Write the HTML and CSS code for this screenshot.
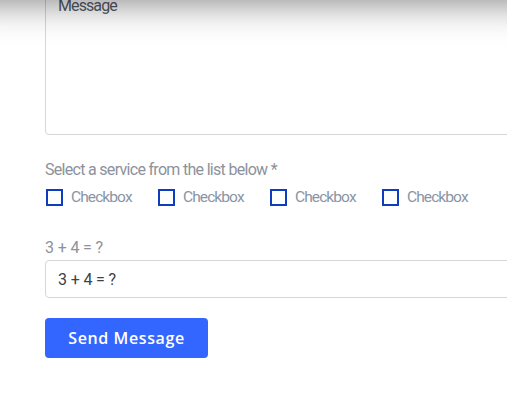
FILE: index.html
```html
<!DOCTYPE html>
<html>
<head>
<meta charset="utf-8">
<link rel="stylesheet" href="styles.css">
</head>
<body>
<div class="header-shadow"></div>
<form class="form">
  <div class="textarea">Message</div>
  <div class="field">
    <div class="label">Select a service from the list below *</div>
    <div class="checks">
      <label class="check"><span class="box"></span>Checkbox</label>
      <label class="check"><span class="box"></span>Checkbox</label>
      <label class="check"><span class="box"></span>Checkbox</label>
      <label class="check"><span class="box"></span>Checkbox</label>
    </div>
  </div>
  <div class="field captcha">
    <div class="label sum">3 + 4 = ?</div>
    <div class="input">3 + 4 = ?</div>
  </div>
  <button type="button" class="send">Send Message</button>
</form>
</body>
</html>
```
FILE: styles.css
```css
html, body {
  margin: 0;
  padding: 0;
  background: #fff;
  overflow: hidden;
}
body {
  font-family: Roboto, "Liberation Sans", sans-serif;
  width: 507px;
  height: 403px;
}
.header-shadow {
  position: fixed;
  top: -40px;
  left: -40px;
  right: -40px;
  height: 40px;
  background: #fff;
  box-shadow: 0 0 38px rgba(0, 0, 0, 0.55);
}
.form {
  padding-left: 45px;
  width: 520px;
  display: flex;
  flex-direction: column;
  align-items: flex-start;
}
.textarea {
  box-sizing: border-box;
  width: 520px;
  height: 149px;
  margin-top: -14px;
  border: 1px solid #d6d6d6;
  border-radius: 4px;
  padding: 9px 12px;
  font-size: 16px;
  line-height: 19px;
  color: #555b66;
  letter-spacing: -0.9px;
}
.field {
  margin-top: 25px;
  width: 100%;
}
.label {
  font-size: 16px;
  color: #8c929c;
  letter-spacing: -0.7px;
  line-height: 19px;
}
.label.sum {
  letter-spacing: -0.4px;
  word-spacing: 0.5px;
}
.checks {
  display: flex;
  margin-top: 9px;
}
.check {
  display: flex;
  align-items: center;
  width: 112px;
  font-size: 15.5px;
  color: #8a95a5;
  letter-spacing: -0.9px;
  line-height: 19px;
}
.box {
  box-sizing: border-box;
  width: 17px;
  height: 17px;
  border: 2px solid #0b3fbf;
  margin-right: 8px;
  margin-left: 1px;
}
.captcha {
  margin-top: 31px;
}
.input {
  box-sizing: border-box;
  margin-top: 3px;
  width: 470px;
  height: 38px;
  border: 1px solid #d6d6d6;
  border-radius: 4px;
  padding: 0 12px;
  display: flex;
  align-items: center;
  font-size: 16px;
  color: #3d4148;
  letter-spacing: -0.4px;
  word-spacing: 0.5px;
}
.send {
  margin-top: 20px;
  width: 163px;
  height: 40px;
  border: none;
  border-radius: 4px;
  background: #3366ff;
  color: #fff;
  font-family: "Open Sans", Lato, sans-serif;
  font-weight: 600;
  font-size: 16px;
  letter-spacing: 0.6px;
  padding: 0;
}
```
